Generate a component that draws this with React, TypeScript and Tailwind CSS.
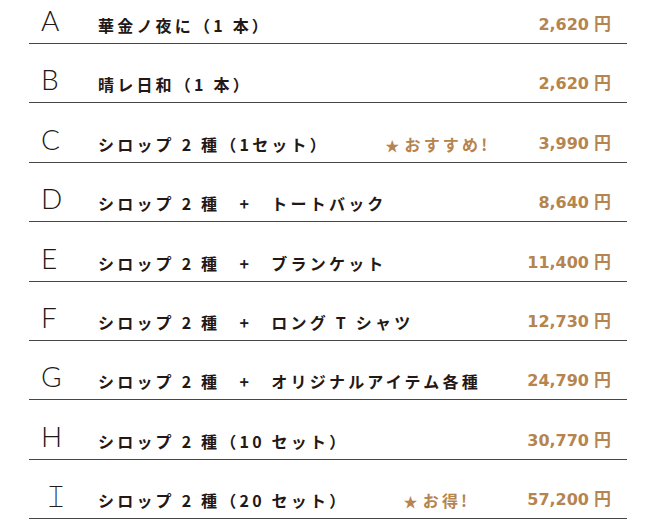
import React from "react";

type Plan = {
  letter: string;
  name: string;
  badge?: string;
  badgeClass?: string;
  price: string;
};

const plans: Plan[] = [
  { letter: "A", name: "華金ノ夜に（1 本）", price: "2,620" },
  { letter: "B", name: "晴レ日和（1 本）", price: "2,620" },
  { letter: "C", name: "シロップ 2 種（1セット）", badge: "おすすめ!", badgeClass: "mr-[48px]", price: "3,990" },
  { letter: "D", name: "シロップ 2 種　+　トートバック", price: "8,640" },
  { letter: "E", name: "シロップ 2 種　+　ブランケット", price: "11,400" },
  { letter: "F", name: "シロップ 2 種　+　ロング T シャツ", price: "12,730" },
  { letter: "G", name: "シロップ 2 種　+　オリジナルアイテム各種", price: "24,790" },
  { letter: "H", name: "シロップ 2 種（10 セット）", price: "30,770" },
  { letter: "Ｉ", name: "シロップ 2 種（20 セット）", badge: "お得!", badgeClass: "mr-[57px]", price: "57,200" },
];

const jp = "font-['Noto_Sans_CJK_JP','Noto_Sans',sans-serif]";

const App: React.FC = () => {
  return (
    <div className="w-[656px] h-[530px] bg-white overflow-hidden">
      <div className="ml-[29px] w-[598px] flex flex-col gap-[15.375px]">
        {plans.map((p) => (
          <div
            key={p.letter}
            className="h-[44px] flex items-end pb-[10px] border-b border-[#4a4545] text-[#231815]"
          >
            <div
              className={`w-[69px] pl-[12px] text-[28px] leading-none mb-[-1px] ${
                p.letter === "Ｉ" ? `${jp} font-thin pl-[13px]` : "font-['Lato',sans-serif] font-light"
              }`}
            >
              {p.letter}
            </div>
            <div className={`flex-1 ${jp} font-bold text-[16px] tracking-[0.2em] leading-none`}>
              {p.name}
            </div>
            {p.badge && (
              <div
                className={`${jp} font-bold text-[#b5844f] text-[16px] tracking-[0.2em] leading-none ${p.badgeClass}`}
              >
                <span className="text-[14px] mr-[2px]">★</span>
                {p.badge}
              </div>
            )}
            <div className="pr-[16px] text-[#b5844f] font-bold leading-none flex items-baseline">
              <span className="font-['DejaVu_Sans',sans-serif] text-[16px]">{p.price}</span>
              <span className={`${jp} text-[17px] ml-[5px]`}>円</span>
            </div>
          </div>
        ))}
      </div>
    </div>
  );
};

export default App;
